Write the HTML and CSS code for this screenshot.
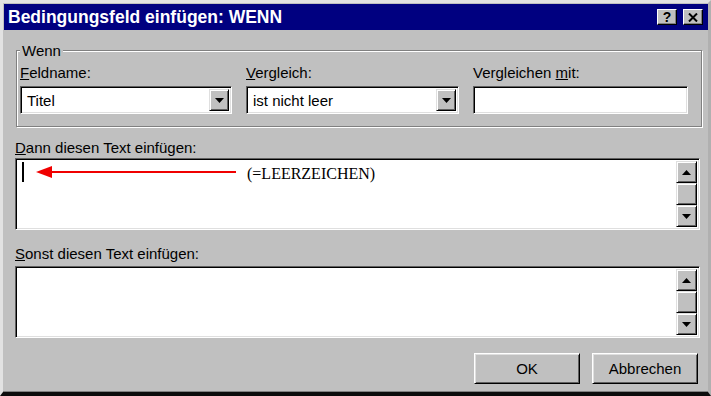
FILE: index.html
```html
<!DOCTYPE html>
<html lang="de">
<head>
  <meta charset="UTF-8">
  <title>Bedingungsfeld einfügen: WENN</title>
  <link rel="stylesheet" href="styles.css">
</head>
<body>
  <div class="window">
    <!-- Title bar -->
    <div class="titlebar">
      <span class="title">Bedingungsfeld einfügen: WENN</span>
      <div class="title-btns">
        <span class="tbtn help">?</span>
        <span class="tbtn close">
          <svg width="10" height="9" viewBox="0 0 10 9"><path d="M1 0.5 L9 8.5 M9 0.5 L1 8.5" stroke="#000" stroke-width="2"/></svg>
        </span>
      </div>
    </div>

    <div class="content">
      <!-- Wenn group -->
      <fieldset class="group">
        <legend>Wenn</legend>
        <div class="cols">
          <div class="col">
            <label><u>F</u>eldname:</label>
            <div class="combo">
              <span class="value">Titel</span>
              <span class="drop"><svg width="9" height="5" viewBox="0 0 9 5"><polygon points="0,0 9,0 4.5,5" fill="#000"/></svg></span>
            </div>
          </div>
          <div class="col">
            <label><u>V</u>ergleich:</label>
            <div class="combo">
              <span class="value">ist nicht leer</span>
              <span class="drop"><svg width="9" height="5" viewBox="0 0 9 5"><polygon points="0,0 9,0 4.5,5" fill="#000"/></svg></span>
            </div>
          </div>
          <div class="col">
            <label>Vergleichen <u>m</u>it:</label>
            <div class="field"></div>
          </div>
        </div>
      </fieldset>

      <!-- Dann -->
      <label class="section-label"><u>D</u>ann diesen Text einfügen:</label>
      <div class="memo">
        <div class="memo-text">
          <span class="caret"></span>
          <svg class="arrow" width="200" height="14" viewBox="0 0 200 14">
            <line x1="12" y1="7" x2="200" y2="7" stroke="#f00000" stroke-width="2"/>
            <polygon points="0,7 16,1 16,13" fill="#f00000"/>
          </svg>
          <span class="note">(=LEERZEICHEN)</span>
        </div>
        <div class="scrollbar">
          <span class="sbtn"><svg width="9" height="5" viewBox="0 0 9 5"><polygon points="0,5 9,5 4.5,0" fill="#000"/></svg></span>
          <span class="thumb"></span>
          <span class="track"></span>
          <span class="sbtn"><svg width="9" height="5" viewBox="0 0 9 5"><polygon points="0,0 9,0 4.5,5" fill="#000"/></svg></span>
        </div>
      </div>

      <!-- Sonst -->
      <label class="section-label second"><u>S</u>onst diesen Text einfügen:</label>
      <div class="memo">
        <div class="memo-text"></div>
        <div class="scrollbar">
          <span class="sbtn"><svg width="9" height="5" viewBox="0 0 9 5"><polygon points="0,5 9,5 4.5,0" fill="#000"/></svg></span>
          <span class="thumb"></span>
          <span class="track"></span>
          <span class="sbtn"><svg width="9" height="5" viewBox="0 0 9 5"><polygon points="0,0 9,0 4.5,5" fill="#000"/></svg></span>
        </div>
      </div>

      <!-- Buttons -->
      <div class="buttons">
        <button class="btn">OK</button>
        <button class="btn">Abbrechen</button>
      </div>
    </div>
  </div>
</body>
</html>
```

FILE: styles.css
```css
/* General */
body {
  margin: 0;
  font-family: "Liberation Sans", Arial, sans-serif;
  font-size: 15px;
  line-height: 17px;
  color: #000;
  background: #c0c0c0;
}

/* Dialog window */
.window {
  width: 711px;
  height: 396px;
  box-sizing: border-box;
  background: #c0c0c0;
  border-top: 3px solid #e2e2e2;
  border-left: 3px solid #e2e2e2;
  border-right: 3px solid #b0b0b0;
  border-bottom: 4px solid #0c0c0c;
  padding: 1px 0 0 1px;
  box-shadow: inset 0 -1px 0 #808080;
}

/* Title bar */
.titlebar {
  height: 26px;
  background: #000080;
  display: flex;
  align-items: center;
  justify-content: space-between;
  padding: 0 5px 0 4px;
}

.title {
  color: #fff;
  font-weight: bold;
  font-size: 17.5px;
  line-height: 20px;
}

.title-btns {
  display: flex;
  gap: 6px;
}

.tbtn {
  width: 20px;
  height: 16px;
  box-sizing: border-box;
  background: #c0c0c0;
  border-top: 1px solid #fff;
  border-left: 1px solid #fff;
  border-right: 1px solid #000;
  border-bottom: 1px solid #000;
  box-shadow: inset -1px -1px 0 #808080;
  display: flex;
  align-items: center;
  justify-content: center;
  font-weight: bold;
  font-size: 14px;
  line-height: 14px;
}

/* Dialog body */
.content {
  padding: 12px 8px 0 11px;
}

/* Wenn group */
.group {
  margin: 0 0 0 1px;
  padding: 5px 13px 12px 3px;
  border: 1px solid #808080;
  box-shadow: inset 1px 1px 0 #fff, 1px 1px 0 #fff;
}

.group legend {
  padding: 0 2px;
  background: #c0c0c0;
}

.cols {
  display: grid;
  grid-template-columns: 212px 213px 215px;
  column-gap: 14px;
}

.col label {
  display: block;
  margin-bottom: 5px;
}

/* Sunken edit fields */
.combo,
.field,
.memo {
  box-sizing: border-box;
  background: #fff;
  border-top: 1px solid #606060;
  border-left: 1px solid #606060;
  border-right: 1px solid #fff;
  border-bottom: 1px solid #fff;
  box-shadow: inset 1px 1px 0 #000, inset -1px -1px 0 #dfdfdf;
}

.combo,
.field {
  height: 28px;
}

.combo {
  display: flex;
  align-items: stretch;
  padding: 2px;
}

.combo .value {
  flex: 1;
  padding-left: 4px;
  display: flex;
  align-items: center;
}

.combo .drop,
.sbtn,
.thumb {
  box-sizing: border-box;
  background: #c0c0c0;
  border-top: 1px solid #dfdfdf;
  border-left: 1px solid #dfdfdf;
  border-right: 1px solid #000;
  border-bottom: 1px solid #000;
  box-shadow: inset 1px 1px 0 #fff, inset -1px -1px 0 #606060;
}

.combo .drop {
  width: 20px;
  display: flex;
  align-items: center;
  justify-content: center;
}

/* Section labels */
.section-label {
  display: block;
  margin: 12px 0 2px 0;
}

.section-label.second {
  margin: 15px 0 4px 0;
}

/* Multi-line text boxes */
.memo {
  height: 72px;
  display: flex;
  padding: 2px;
}

.memo-text {
  flex: 1;
  display: flex;
  align-items: flex-start;
  padding: 4px 0 0 4px;
}

.caret {
  width: 2px;
  height: 20px;
  margin-top: -3px;
  background: #000;
}

.arrow {
  margin-left: 12px;
}

.note {
  margin-left: 11px;
  font-family: "Liberation Serif", "Times New Roman", serif;
  font-size: 16px;
  line-height: 18px;
}

.scrollbar {
  width: 21px;
  display: flex;
  flex-direction: column;
}

.sbtn {
  height: 22px;
  display: flex;
  align-items: center;
  justify-content: center;
}

.thumb {
  height: 22px;
}

.track {
  flex: 1;
  background: #e4e4e4;
}

/* Buttons */
.buttons {
  display: flex;
  justify-content: flex-end;
  gap: 12px;
  margin-top: 15px;
  padding-right: 2px;
}

.btn {
  width: 106px;
  height: 31px;
  font-family: inherit;
  font-size: 15px;
  color: #000;
  background: #c0c0c0;
  border-top: 1px solid #fff;
  border-left: 1px solid #fff;
  border-right: 1px solid #000;
  border-bottom: 1px solid #000;
  box-shadow: inset 1px 1px 0 #dfdfdf, inset -1px -1px 0 #606060;
  padding: 0;
}
```
